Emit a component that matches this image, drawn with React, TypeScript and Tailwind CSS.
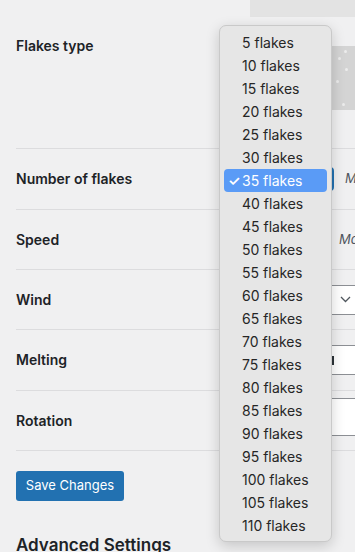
const COUNTS = [5, 10, 15, 20, 25, 30, 35, 40, 45, 50, 55, 60, 65, 70, 75, 80, 85, 90, 95, 100, 105, 110];

const ROWS = [
  { label: "Number of flakes", h: "h-[61px]" },
  { label: "Speed", h: "h-[60px]" },
  { label: "Wind", h: "h-[60px]" },
  { label: "Melting", h: "h-[61px]" },
  { label: "Rotation", h: "h-[60px]" },
];

function SnowPreview() {
  const dots = [
    [344, 50], [338, 57], [345, 68], [322, 72], [336, 80], [342, 103], [300, 60], [310, 90], [285, 75],
  ];
  return (
    <div className="relative h-[64px] w-[110px] bg-[#d4d4d4]">
      {dots.map(([x, y], i) => (
        <span
          key={i}
          className="absolute h-[3px] w-[3px] rounded-full bg-[#ececec]"
          style={{ left: x - 245, top: y - 46 }}
        />
      ))}
    </div>
  );
}

function Field({ label }: { label: string }) {
  if (label === "Number of flakes")
    return (
      <div className="flex shrink-0 items-center">
        <div className="h-[24px] w-[104px] rounded-[4px] border-2 border-[#2271b1] bg-white" />
        <span className="ml-[11px] whitespace-nowrap text-[13px] italic text-[#50575e]">Max</span>
      </div>
    );
  if (label === "Speed")
    return (
      <div className="flex shrink-0 items-center">
        <div className="h-[24px] w-[100px]" />
        <span className="ml-[9px] whitespace-nowrap text-[13px] italic text-[#50575e]">Max</span>
      </div>
    );
  if (label === "Wind")
    return (
      <div className="flex h-[30px] w-[140px] shrink-0 items-center justify-end rounded-[4px] border border-[#8c8f94] bg-white pr-[18px]">
        <svg width="11" height="7" viewBox="0 0 11 7" fill="none" stroke="#50575e" strokeWidth="1.3">
          <path d="M1 1l4.5 4.5L10 1" />
        </svg>
      </div>
    );
  if (label === "Melting")
    return (
      <div className="flex h-[30px] w-[140px] shrink-0 items-center rounded-[4px] border border-[#8c8f94] bg-white pl-[101px]">
        <span className="h-[9px] w-[2px] bg-[#2c3338]" />
      </div>
    );
  return <div className="mb-[8px] h-[38px] w-[140px] shrink-0 rounded-[4px] border border-[#8c8f94] bg-white" />;
}

export default function App() {
  return (
    <div
      className="relative h-[552px] w-[355px] overflow-hidden bg-[#f0f0f1] text-[#1d2327]"
      style={{ fontFamily: "Inter, 'Noto Sans', sans-serif" }}
    >
      <div className="ml-[250px] h-[17px] bg-[#e3e3e3]" />
      <div className="pl-[16px]">
        <div className="flex h-[132px] border-b border-[#dcdcde]">
          <div className="w-[214px] shrink-0 pt-[19px] text-[14px] font-semibold leading-[20px]">Flakes type</div>
          <div className="shrink-0 pl-[15px] pt-[29px]">
            <SnowPreview />
          </div>
        </div>
        {ROWS.map(({ label, h }) => (
          <div key={label} className={"flex items-center border-b border-[#dcdcde] " + h}>
            <div className="w-[214px] shrink-0 text-[14px] font-semibold leading-[20px]">{label}</div>
            <Field label={label} />
          </div>
        ))}
        <button className="mt-[20px] h-[30px] w-[108px] rounded-[3px] bg-[#2271b1] text-[13px] text-white">
          Save Changes
        </button>
        <h2 className="mt-[32px] whitespace-nowrap text-[17px] font-semibold leading-[24px]">Advanced Settings</h2>
      </div>

      <div className="absolute left-[219px] top-[25px] w-[113px] rounded-[7px] border border-[#c9c9c9] bg-[#e6e6e6] px-[4px] pb-[4px] pt-[5px] shadow-[0_4px_14px_rgba(0,0,0,0.18)]">
        {COUNTS.map((n) => {
          const sel = n === 35;
          return (
            <div
              key={n}
              className={
                "flex h-[23px] items-center rounded-[4px] text-[14px] " +
                (sel ? "bg-[#5a9bf6] text-white" : "text-[#262626]")
              }
            >
              <span className="w-[18px] pl-[4px] text-[14px] font-semibold">{sel ? "✓" : ""}</span>
              <span>{n} flakes</span>
            </div>
          );
        })}
      </div>
    </div>
  );
}
